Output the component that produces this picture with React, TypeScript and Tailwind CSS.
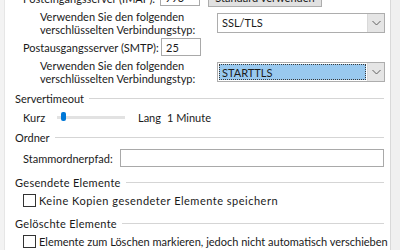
import React from "react";

function Chevron() {
  return (
    <svg width="9" height="6" viewBox="0 0 9 6" className="block">
      <path d="M0.5 1 L4.5 5 L8.5 1" fill="none" stroke="#606060" strokeWidth="1" />
    </svg>
  );
}

function Combo({ value, selected }: { value: string; selected?: boolean }) {
  return (
    <div className="flex h-[20px] w-[168px] shrink-0 border border-[#adadad] bg-white">
      <div className="flex flex-1 items-center p-[1px]">
        {selected ? (
          <div className="flex h-full w-full items-center border border-dotted border-[#3a3a3a] bg-[#99c9ef] pl-[2px]">
            {value}
          </div>
        ) : (
          <div className="pl-[3px]">{value}</div>
        )}
      </div>
      <div className="flex w-[17px] items-center justify-center border-l border-[#d9d9d9] bg-[#e5e5e5]">
        <Chevron />
      </div>
    </div>
  );
}

function Header({ title, wide }: { title: string; wide?: boolean }) {
  return (
    <div className="flex h-[18px] items-center pl-[10px]">
      <span className={wide ? "shrink-0 whitespace-nowrap tracking-[0.3px]" : "shrink-0 whitespace-nowrap"}>{title}</span>
      <div className="ml-[5px] h-px flex-1 bg-[#d5d5d5]" />
    </div>
  );
}

function Check({ label, wide }: { label: string; wide?: boolean }) {
  return (
    <div className="flex h-[18px] items-center pl-[18px]">
      <div className="h-[13px] w-[13px] shrink-0 border border-[#333333] bg-white" />
      <span className={wide ? "ml-[3px] whitespace-nowrap tracking-[0.5px]" : "ml-[3px] whitespace-nowrap"}>{label}</span>
    </div>
  );
}

export default function App() {
  return (
    <div
      className="flex h-[250px] w-[400px] overflow-hidden bg-[#f0f0f0] text-[11px] leading-[13px] text-[#1a1a1a]"
      style={{ fontFamily: 'Lato, sans-serif' }}
    >
      <div className="w-[5px] shrink-0 border-r border-[#e6e6e6] bg-[#f3f3f3]" />
      <div className="w-[386px] shrink-0 overflow-hidden border-r border-[#d9d9d9] bg-white pr-[6px]">
        <div className="-mt-[13px] flex flex-col">
          {/* IMAP row */}
          <div className="flex h-[20px] items-center pl-[18px]">
            <div className="w-[137px] shrink-0 whitespace-nowrap pt-[3px]">Posteingangsserver (IMAP):</div>
            <div className="flex h-[18px] w-[40px] shrink-0 items-center border border-[#a9a9a9] pl-[4px]">993</div>
            <div className="ml-[8px] flex h-[20px] w-[114px] shrink-0 items-center justify-center border border-[#adadad] bg-[#e1e1e1]">
              Standard verwenden
            </div>
          </div>
          {/* Verwenden 1 */}
          <div className="flex h-[31px] items-center pl-[35px]">
            <div className="w-[177px] shrink-0 whitespace-nowrap">
              <div>Verwenden Sie den folgenden</div>
              <div>verschlüsselten Verbindungstyp:</div>
            </div>
            <Combo value="SSL/TLS" />
          </div>
          {/* SMTP row */}
          <div className="flex h-[18px] items-center pl-[18px]">
            <div className="w-[138px] shrink-0 whitespace-nowrap">Postausgangsserver (SMTP):</div>
            <div className="flex h-[18px] w-[40px] shrink-0 items-center border border-[#a9a9a9] pl-[4px]">25</div>
          </div>
          {/* Verwenden 2 */}
          <div className="flex h-[32px] items-center pl-[35px]">
            <div className="w-[177px] shrink-0 whitespace-nowrap">
              <div>Verwenden Sie den folgenden</div>
              <div>verschlüsselten Verbindungstyp:</div>
            </div>
            <Combo value="STARTTLS" selected />
          </div>
          <div className="h-[1px]" />
          <div className="flex h-[19px] items-center">
            <div className="flex-1"><Header title="Servertimeout" /></div>
          </div>
          {/* Slider row */}
          <div className="flex h-[18px] items-center pl-[18px]">
            <div className="w-[34px] shrink-0">Kurz</div>
            <div className="relative h-[10px] w-[68px] shrink-0">
              <div className="absolute left-0 right-0 top-[4px] h-[3px] bg-[#e2e2e2]" />
              <div className="absolute left-[4px] top-0 h-[9px] w-[5px] rounded-[2px] bg-[#0078d7]" />
            </div>
            <div className="ml-[13px]">Lang</div>
            <div className="ml-[6px]">1 Minute</div>
          </div>
          <div className="flex h-[22px] items-center">
            <div className="flex-1"><Header title="Ordner" /></div>
          </div>
          {/* Stammordnerpfad */}
          <div className="flex h-[20px] items-center pl-[18px]">
            <div className="w-[97px] shrink-0 whitespace-nowrap">Stammordnerpfad:</div>
            <div className="h-[18px] flex-1 border border-[#a9a9a9]" />
          </div>
          <div className="h-[5px]" />
          <Header title="Gesendete Elemente" wide />
          <Check label="Keine Kopien gesendeter Elemente speichern" wide />
          <div className="h-[5px]" />
          <Header title="Gelöschte Elemente" wide />
          <Check label="Elemente zum Löschen markieren, jedoch nicht automatisch verschieben" />
        </div>
      </div>
    </div>
  );
}
